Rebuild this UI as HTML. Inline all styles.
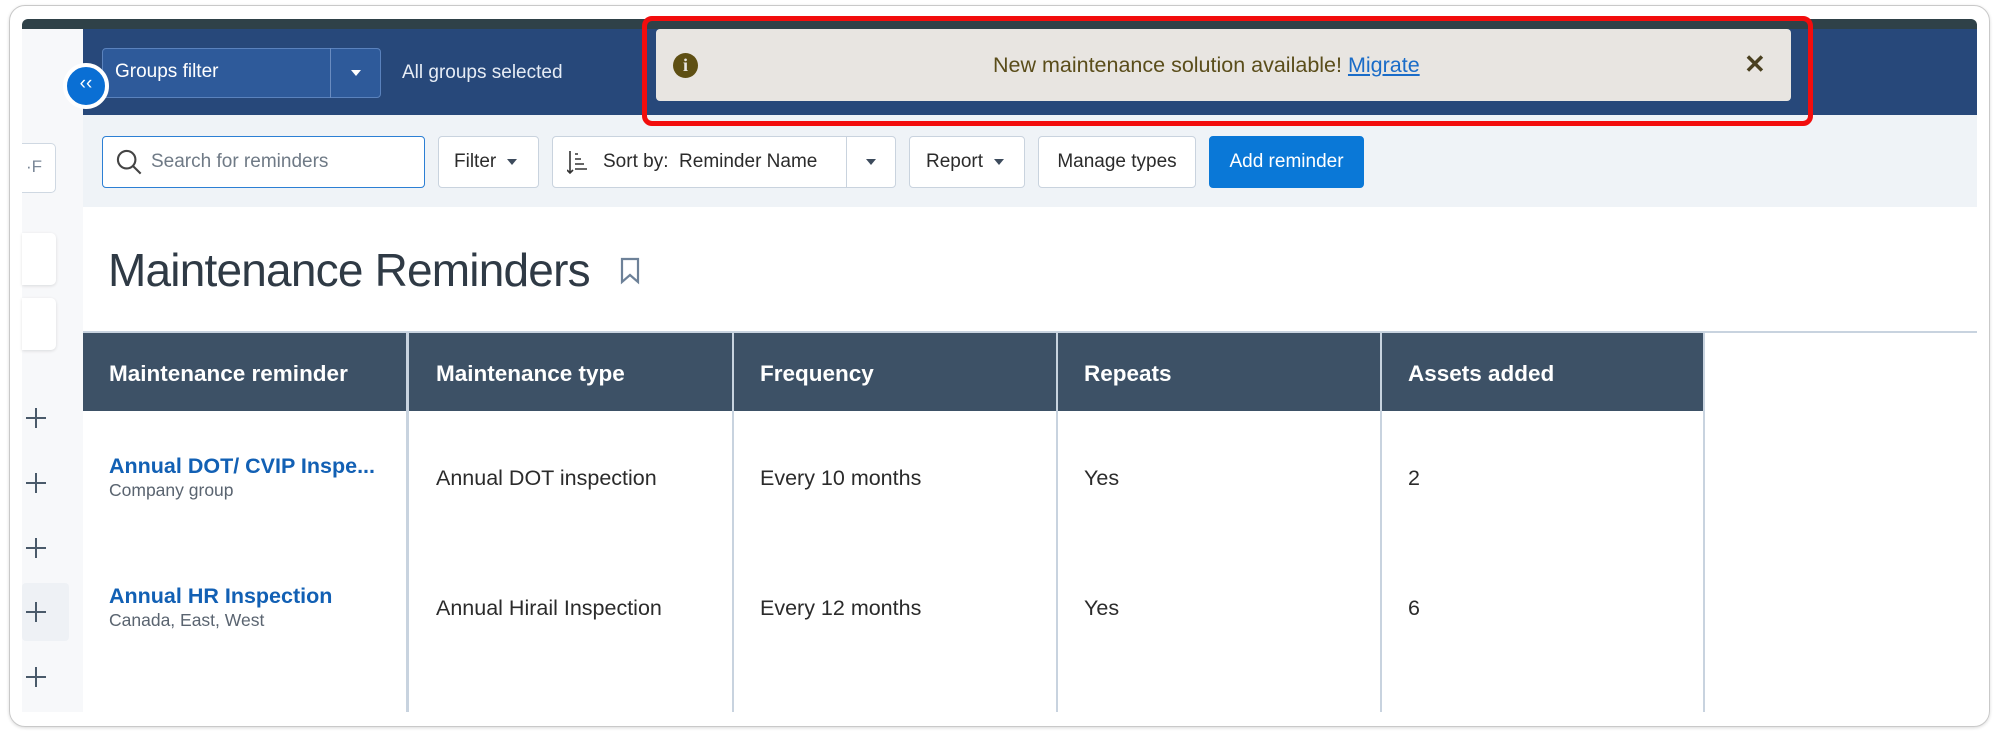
<!DOCTYPE html>
<html><head><meta charset="utf-8"><style>
*{box-sizing:border-box;margin:0;padding:0}
body{width:1999px;height:739px;background:#fff;position:relative;overflow:hidden;font-family:"Liberation Sans",sans-serif}
.a{position:absolute}
.card{left:9px;top:5px;width:1981px;height:722px;border:1.5px solid #c9c9c9;border-radius:16px;box-shadow:0 1px 3px rgba(0,0,0,.15);overflow:hidden}
.btn{position:absolute;top:136px;height:52px;border:1px solid #c9d3de;border-radius:4px;background:#fff;font-size:19px;color:#2b2b2b;display:flex;align-items:center}
.tri{display:inline-block;width:0;height:0;border-left:5px solid transparent;border-right:5px solid transparent;border-top:6px solid #3d4b5c}
.th{position:absolute;top:361px;font-size:22.5px;font-weight:bold;color:#fff}
.td{position:absolute;font-size:21.5px;color:#2b2b2b}
.vl{position:absolute;top:332px;height:380px;width:2px;background:#c8d3df}
.plus{position:absolute;left:26px;width:20px;height:20px}
.plus:before{content:"";position:absolute;left:9px;top:0;width:2px;height:20px;background:#4a5a6a}
.plus:after{content:"";position:absolute;left:0;top:9px;width:20px;height:2px;background:#4a5a6a}
</style></head><body>
<div class="a card"></div>
<div class="a" style="left:22px;top:19px;width:1955px;height:10px;background:#2f4148;border-radius:6px 6px 0 0"></div>
<div class="a" style="left:22px;top:29px;width:61px;height:683px;background:#f7f8fa"></div>
<div class="a" style="left:22px;top:143px;width:34px;height:50px;background:#fff;border:1px solid #cfd8e2;border-left:none;border-radius:0 5px 5px 0;font-size:17px;color:#7a8797;padding:13px 0 0 4px">·F</div>
<div class="a" style="left:22px;top:233px;width:34px;height:52px;background:#fff;border-radius:0 5px 5px 0;box-shadow:0 1px 3px rgba(0,0,0,.12)"></div>
<div class="a" style="left:22px;top:298px;width:34px;height:52px;background:#fff;border-radius:0 5px 5px 0;box-shadow:0 1px 3px rgba(0,0,0,.12)"></div>
<div class="a" style="left:22px;top:583px;width:47px;height:58px;background:#eef1f5;border-radius:4px"></div>
<div class="plus" style="top:408px"></div><div class="plus" style="top:473px"></div><div class="plus" style="top:538px"></div><div class="plus" style="top:602px"></div><div class="plus" style="top:667px"></div>
<div class="a" style="left:83px;top:29px;width:1894px;height:86px;background:#27487a"></div>
<div class="a" style="left:102px;top:48px;width:279px;height:50px;background:#2e5a9a;border:1px solid #5a82bd;border-radius:4px"></div>
<div class="a" style="left:330px;top:48px;width:1px;height:50px;background:#6a8cc0"></div>
<div class="a" style="left:115px;top:61px;font-size:19px;color:#fff">Groups filter</div>
<div class="a tri" style="left:351px;top:70px;border-top-color:#fff"></div>
<div class="a" style="left:402px;top:62px;font-size:19px;color:#e6ecf5">All groups selected</div>
<div class="a" style="left:63px;top:63px;width:46px;height:46px;border-radius:50%;background:#0a6fd4;border:4px solid #fff;color:#fff;font-size:19px;text-align:center;line-height:34px">‹‹</div>
<div class="a" style="left:656px;top:29px;width:1135px;height:72px;background:#e8e5e1;border-radius:4px"></div>
<div class="a" style="left:673px;top:53px;width:25px;height:25px;border-radius:50%;background:#5e4f13;color:#e8e5e1;font:bold 18px 'Liberation Serif',serif;text-align:center;line-height:25px">i</div>
<div class="a" style="left:993px;top:53px;font-size:21.5px;color:#5a4d1a">New maintenance solution available! <span style="color:#1a6cc8;text-decoration:underline">Migrate</span></div>
<div class="a" style="left:1744px;top:49px;font-size:26px;color:#4a4020;font-weight:bold">✕</div>
<div class="a" style="left:83px;top:115px;width:1894px;height:92px;background:#eff3f7"></div>
<div class="btn" style="left:102px;width:323px;border:1.5px solid #2c7fd4;color:#6f7a86;padding-left:12px">
<svg width="28" height="28" viewBox="0 0 24 24" style="margin-right:8px"><circle cx="10" cy="10" r="7.5" fill="none" stroke="#444" stroke-width="1.8"/><path d="M15.5 15.5L22 22" stroke="#444" stroke-width="1.8"/></svg>Search for reminders</div>
<div class="btn" style="left:438px;width:101px;padding-left:15px">Filter&nbsp;&nbsp;<span class="tri"></span></div>
<div class="btn" style="left:552px;width:344px;padding-left:14px">
<svg width="24" height="26" viewBox="0 0 24 26" style="margin-right:12px"><path d="M3 2v22M0 21l3 3 3-3M8 5h3M8 10h6M8 15h9M8 20h12" stroke="#333" stroke-width="1.6" fill="none"/></svg>Sort by:&nbsp; Reminder Name</div>
<div class="a" style="left:846px;top:137px;width:1px;height:50px;background:#c9d3de"></div>
<div class="a tri" style="left:866px;top:159px"></div>
<div class="btn" style="left:909px;width:116px;padding-left:16px">Report&nbsp;&nbsp;<span class="tri"></span></div>
<div class="btn" style="left:1038px;width:158px;justify-content:center">Manage types</div>
<div class="btn" style="left:1209px;width:155px;justify-content:center;background:#0a78d7;border-color:#0a78d7;color:#fff">Add reminder</div>
<div class="a" style="left:108px;top:243px;font-size:46px;font-weight:300;color:#2f3a45;letter-spacing:-0.8px">Maintenance Reminders</div>
<svg class="a" style="left:619px;top:257px" width="22" height="28" viewBox="0 0 22 28"><path d="M3 2h16v23l-8-7-8 7z" fill="none" stroke="#6d8198" stroke-width="2.2"/></svg>
<div class="a" style="left:83px;top:331px;width:1894px;height:2px;background:#c8d3df"></div>
<div class="a" style="left:83px;top:333px;width:1621px;height:78px;background:#3d5166"></div>
<div class="vl" style="left:406px;width:3px"></div><div class="vl" style="left:732px"></div><div class="vl" style="left:1056px"></div><div class="vl" style="left:1380px"></div><div class="vl" style="left:1703px"></div>
<div class="th" style="left:109px">Maintenance reminder</div>
<div class="th" style="left:436px">Maintenance type</div>
<div class="th" style="left:760px">Frequency</div>
<div class="th" style="left:1084px">Repeats</div>
<div class="th" style="left:1408px">Assets added</div>
<div class="td" style="left:109px;top:454px;color:#1260b4;font-weight:bold">Annual DOT/ CVIP Inspe...</div>
<div class="td" style="left:109px;top:480px;font-size:17.5px;color:#5a6470">Company group</div>
<div class="td" style="left:436px;top:466px">Annual DOT inspection</div>
<div class="td" style="left:760px;top:466px">Every 10 months</div>
<div class="td" style="left:1084px;top:466px">Yes</div>
<div class="td" style="left:1408px;top:466px">2</div>
<div class="td" style="left:109px;top:584px;color:#1260b4;font-weight:bold">Annual HR Inspection</div>
<div class="td" style="left:109px;top:610px;font-size:17.5px;color:#5a6470">Canada, East, West</div>
<div class="td" style="left:436px;top:596px">Annual Hirail Inspection</div>
<div class="td" style="left:760px;top:596px">Every 12 months</div>
<div class="td" style="left:1084px;top:596px">Yes</div>
<div class="td" style="left:1408px;top:596px">6</div>
<div class="a" style="left:642px;top:16px;width:1171px;height:110px;border:5px solid #f20d0d;border-radius:10px;z-index:10"></div>
</body></html>
